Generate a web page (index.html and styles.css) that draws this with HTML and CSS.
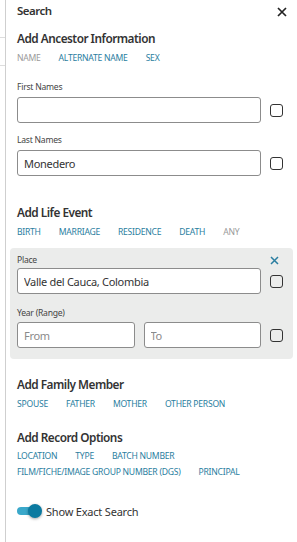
FILE: index.html
```html
<!DOCTYPE html>
<html lang="en">

<head>
    <meta charset="utf-8">
    <meta name="viewport" content="width=device-width, initial-scale=1.0">
    <title>Search</title>
    <link rel="stylesheet" href="styles.css">
</head>

<body>
    <div class="page">
        <!-- edge of the results page behind the drawer -->
        <div class="behind">
            <span class="rule rule-1"></span>
            <span class="rule rule-2"></span>
        </div>

        <aside class="drawer">
            <header class="drawer-head">
                <h1>Search</h1>
                <button class="close" aria-label="Close">
                    <svg width="10" height="10" viewBox="0 0 10 10">
                        <path d="M1 1 L9 9 M9 1 L1 9" stroke="#222" stroke-width="1.7" fill="none" />
                    </svg>
                </button>
            </header>

            <h2 class="heading first">Add Ancestor Information</h2>
            <nav class="tabs">
                <span class="tab off">Name</span>
                <span class="tab">Alternate Name</span>
                <span class="tab">Sex</span>
            </nav>

            <label class="label first-label">First Names</label>
            <div class="field-row">
                <input class="field" type="text" value="">
                <span class="check"></span>
            </div>

            <label class="label">Last Names</label>
            <div class="field-row">
                <input class="field" type="text" value="Monedero">
                <span class="check"></span>
            </div>

            <h2 class="heading life">Add Life Event</h2>
            <nav class="tabs">
                <span class="tab">Birth</span>
                <span class="tab">Marriage</span>
                <span class="tab">Residence</span>
                <span class="tab">Death</span>
                <span class="tab off">Any</span>
            </nav>

            <section class="event">
                <div class="event-top">
                    <label class="label">Place</label>
                    <svg class="remove" width="9" height="9" viewBox="0 0 9 9">
                        <path d="M1 1 L8 8 M8 1 L1 8" stroke="#2a7ea0" stroke-width="1.5" fill="none" />
                    </svg>
                </div>
                <div class="field-row place-row">
                    <input class="field" type="text" value="Valle del Cauca, Colombia">
                    <span class="check"></span>
                </div>

                <label class="label year-label">Year (Range)</label>
                <div class="field-row year-row">
                    <input class="field half" type="text" placeholder="From">
                    <input class="field half" type="text" placeholder="To">
                    <span class="check"></span>
                </div>
            </section>

            <h2 class="heading family">Add Family Member</h2>
            <nav class="tabs">
                <span class="tab">Spouse</span>
                <span class="tab">Father</span>
                <span class="tab">Mother</span>
                <span class="tab">Other Person</span>
            </nav>

            <h2 class="heading record">Add Record Options</h2>
            <nav class="tabs tabs-wrap">
                <span class="tab">Location</span>
                <span class="tab">Type</span>
                <span class="tab">Batch Number</span>
                <span class="tab">Film/Fiche/Image Group Number (DGS)</span>
                <span class="tab">Principal</span>
            </nav>

            <div class="exact">
                <span class="toggle"><span class="knob"></span></span>
                <span class="exact-text">Show Exact Search</span>
            </div>
        </aside>
    </div>
</body>

</html>
```

FILE: styles.css
```css
body {
    margin: 0;
    font-family: 'Noto Sans', 'Open Sans', sans-serif;
    color: #333333;
    background: #ffffff;
}

.page {
    display: flex;
    min-height: 542px;
    overflow: hidden;
}

.behind {
    width: 5px;
    flex-shrink: 0;
    display: flex;
    flex-direction: column;
}

.rule {
    display: block;
    height: 1px;
    background: #dddddd;
}

.rule-1 {
    margin-top: 37px;
}

.rule-2 {
    margin-top: 27px;
}

.drawer {
    flex: 1;
    min-width: 0;
    border-left: 1px solid #cfcfcf;
    padding: 0 14px 0 11px;
}

.drawer-head {
    display: flex;
    justify-content: space-between;
    align-items: center;
    height: 22px;
}

.drawer-head h1 {
    margin: 0;
    font-size: 11.5px;
    font-weight: 600;
    letter-spacing: -0.5px;
    line-height: 22px;
}

.close {
    border: none;
    background: none;
    padding: 0;
    margin: 2px -4px 0 0;
    display: flex;
}

.heading {
    margin: 0;
    font-size: 11.8px;
    font-weight: 600;
    letter-spacing: -0.5px;
    line-height: 18px;
}

.heading.first {
    margin-top: 7px;
}

.heading.life {
    margin-top: 27px;
}

.heading.family {
    margin-top: 16px;
}

.heading.record {
    margin-top: 16px;
}

.tabs {
    display: flex;
    flex-wrap: wrap;
    column-gap: 18px;
    margin-top: 4px;
}

.tab {
    font-size: 8.6px;
    letter-spacing: -0.25px;
    line-height: 15px;
    text-transform: uppercase;
    color: #2a7ea0;
    white-space: nowrap;
}

.tab.off {
    color: #9a9a9a;
}

.tabs-wrap {
    margin-top: 3px;
    row-gap: 1px;
}

.label {
    display: block;
    font-size: 8.6px;
    letter-spacing: -0.25px;
    line-height: 14px;
    color: #444444;
    margin-top: 10px;
}

.first-label {
    margin-top: 14px;
}

.field-row {
    display: flex;
    align-items: center;
    gap: 9px;
    margin-top: 3px;
}

.field {
    flex: 1;
    min-width: 0;
    width: 0;
    height: 26px;
    box-sizing: border-box;
    border: 1px solid #8c8c8c;
    border-radius: 3px;
    padding: 0 6px;
    font-family: 'Noto Sans', 'Open Sans', sans-serif;
    font-size: 11px;
    letter-spacing: -0.3px;
    color: #333333;
    background: #ffffff;
}

.field::placeholder {
    color: #8a8a8a;
}

.check {
    width: 13px;
    height: 13px;
    box-sizing: border-box;
    border: 1.5px solid #333333;
    border-radius: 3px;
    flex-shrink: 0;
}

.event {
    margin: 8px -10px 0 -7px;
    padding: 5px 10px 11px 7px;
    background: #ebeceb;
    border-radius: 4px;
}

.event-top {
    display: flex;
    justify-content: space-between;
    align-items: center;
    height: 14px;
}

.event-top .label {
    margin-top: 0;
}

.remove {
    margin-right: 4px;
}

.place-row {
    margin-top: 1px;
}

.year-label {
    margin-top: 12px;
}

.year-row {
    margin-top: 2px;
}

.exact {
    display: flex;
    align-items: center;
    gap: 5px;
    margin-top: 21px;
    height: 20px;
}

.toggle {
    position: relative;
    width: 22px;
    height: 8px;
    border-radius: 4px;
    background: #3aa8ca;
    margin-right: 2px;
}

.knob {
    position: absolute;
    right: -3px;
    top: -3px;
    width: 14px;
    height: 14px;
    border-radius: 50%;
    background: #0b7aa0;
    box-shadow: 0 1px 3px rgba(0, 0, 0, 0.35);
}

.exact-text {
    font-size: 11px;
    letter-spacing: -0.2px;
    color: #333333;
}
```
